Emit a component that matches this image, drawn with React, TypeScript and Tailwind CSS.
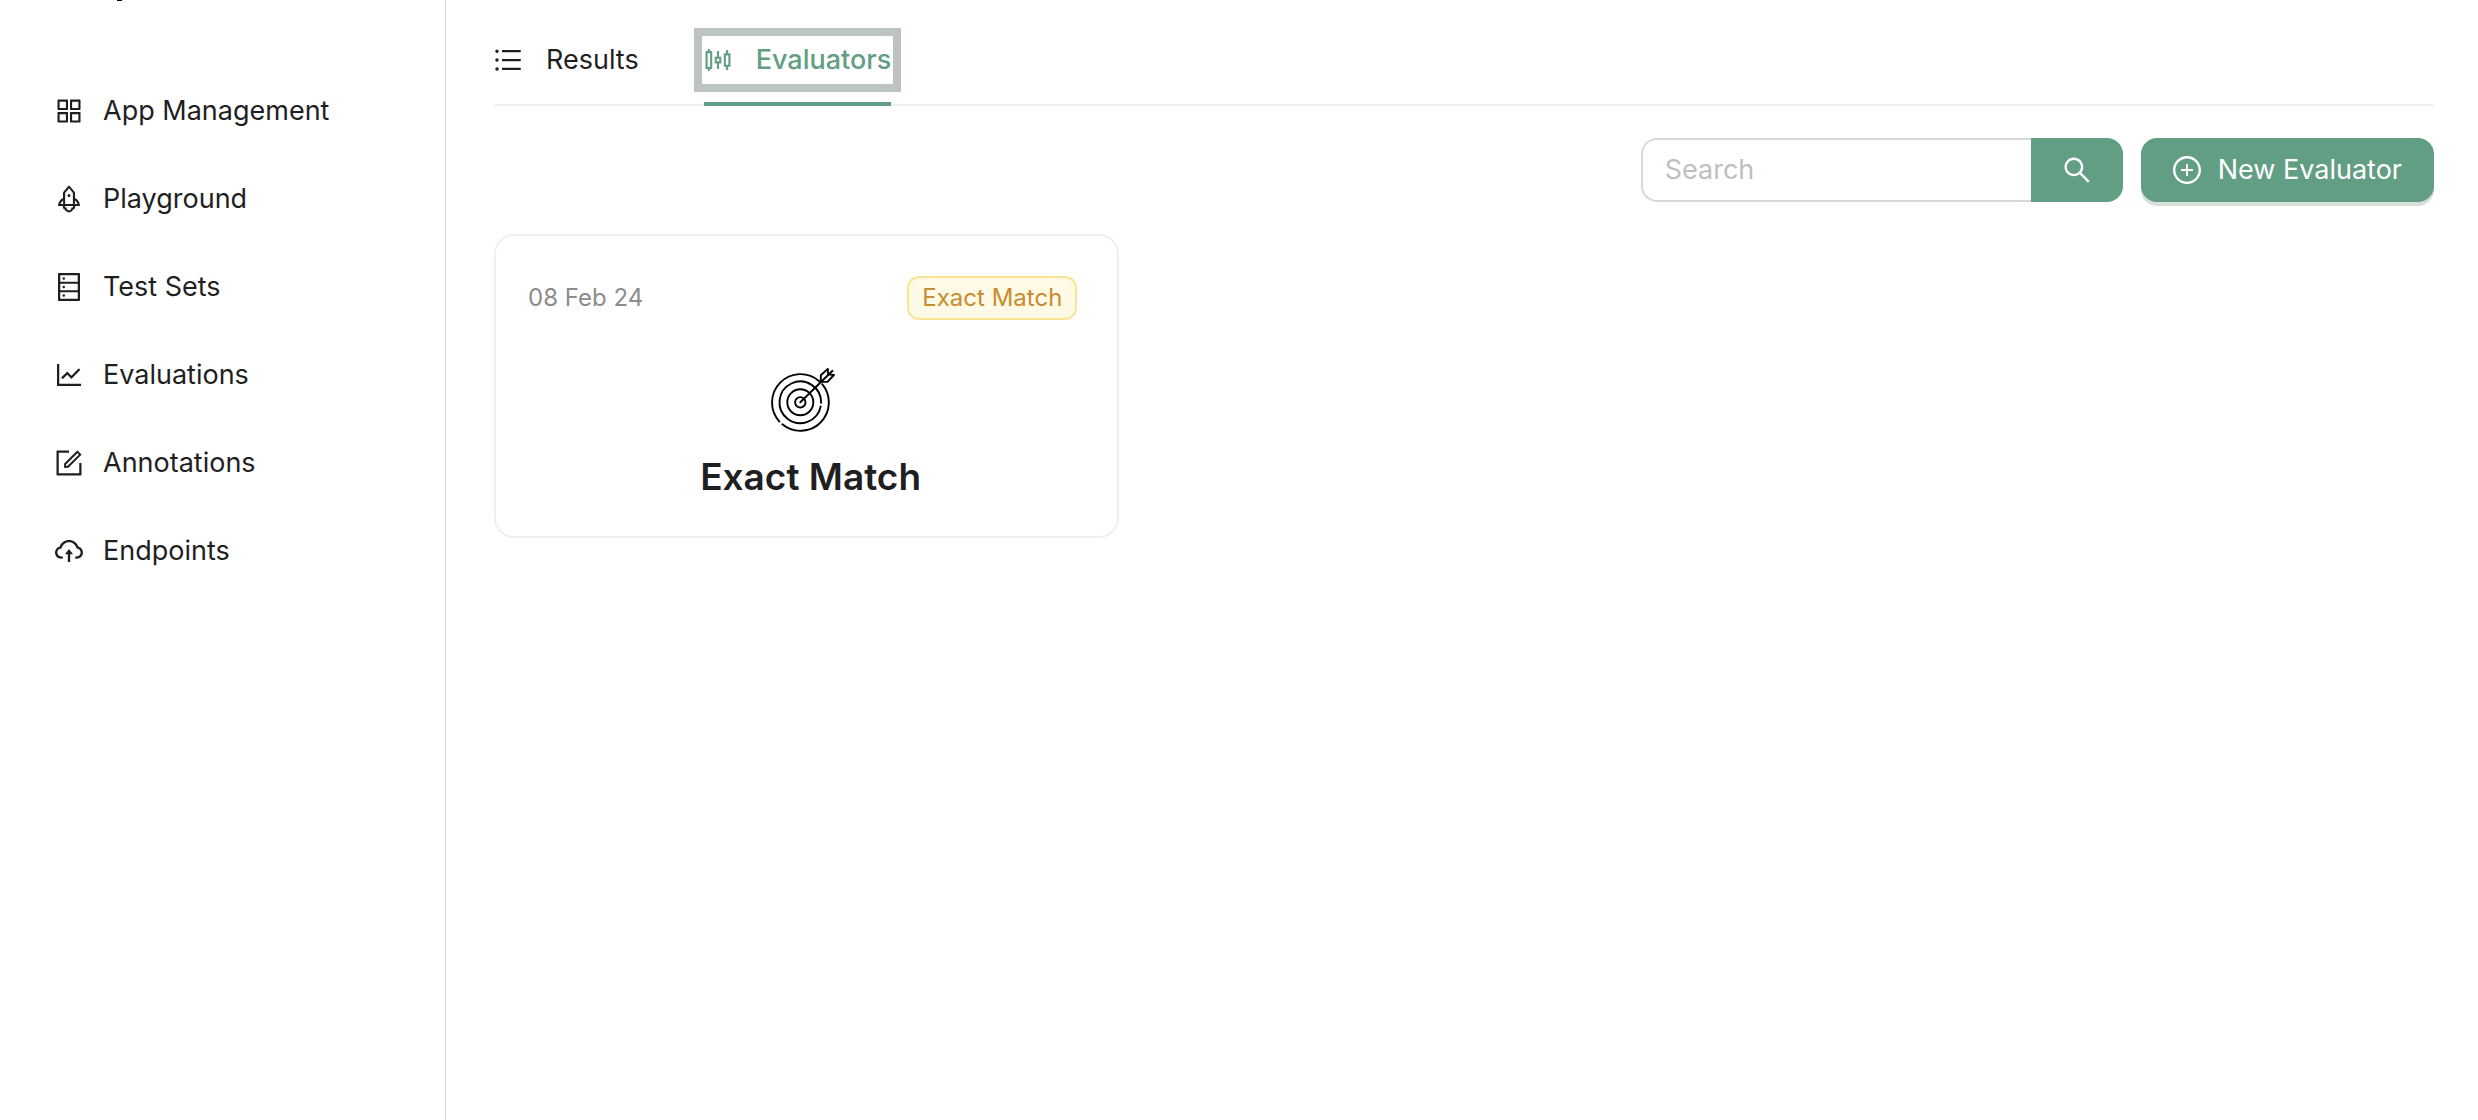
import type { IconType } from "react-icons";
import {
  AiOutlineAppstore,
  AiOutlineCloudUpload,
  AiOutlineDatabase,
  AiOutlineForm,
  AiOutlineLineChart,
  AiOutlinePlusCircle,
  AiOutlineRocket,
  AiOutlineSearch,
  AiOutlineSliders,
  AiOutlineUnorderedList,
} from "react-icons/ai";

const navItems: { label: string; Icon: IconType }[] = [
  { label: "App Management", Icon: AiOutlineAppstore },
  { label: "Playground", Icon: AiOutlineRocket },
  { label: "Test Sets", Icon: AiOutlineDatabase },
  { label: "Evaluations", Icon: AiOutlineLineChart },
  { label: "Annotations", Icon: AiOutlineForm },
  { label: "Endpoints", Icon: AiOutlineCloudUpload },
];

function TargetIcon() {
  return (
    <svg
      viewBox="0 0 64 64"
      className="size-16"
      fill="none"
      stroke="#000"
      strokeWidth="1.9"
      strokeLinecap="round"
      strokeLinejoin="round"
      aria-hidden="true"
    >
      <path d="M8.4 53.6A28.4 28.4 0 0 1 48.2 13.2M51.2 16.2A28.4 28.4 0 0 1 11.3 56.3" />
      <path d="M50.1 34.8A20.8 20.8 0 1 0 49.7 38.4" />
      <circle cx="29.3" cy="34.3" r="13" />
      <circle cx="29.3" cy="34.3" r="5.2" />
      <path d="M29.3 34.3L61.5 2.8" />
      <path d="M49.8 13.9V7.3L56.8 .9L57.2 6.4L63 7L56.4 13.9Z" />
    </svg>
  );
}

function Sidebar() {
  return (
    <aside className="w-[446px] shrink-0 border-r border-[#d9d9d9]">
      <div className="h-[67px] pl-[117px]">
        <div className="h-px w-[5px] bg-black" />
      </div>
      <nav aria-label="Main">
        <ul>
          {navItems.map(({ label, Icon }) => (
            <li key={label}>
              <a href="#" className="flex h-22 items-center gap-[18px] pl-[53px]">
                <Icon className="size-8" />
                {label}
              </a>
            </li>
          ))}
        </ul>
      </nav>
    </aside>
  );
}

export default function App() {
  return (
    <div className="flex min-h-screen bg-white font-[Inter,sans-serif] text-[27px] leading-[44px] text-[#1f1f1f]">
      <Sidebar />
      <main className="min-w-0 flex-1 pr-11 pl-12">
        <div role="tablist" className="flex h-[106px] gap-[65px] border-b-2 border-[#f0f0f0]">
          <button type="button" role="tab" aria-selected="false" className="mt-[38px] flex h-11 items-center gap-6">
            <AiOutlineUnorderedList className="-m-0.5 size-8" />
            Results
          </button>
          <button
            type="button"
            role="tab"
            aria-selected="true"
            className="relative mt-[38px] flex h-11 items-center gap-6 font-medium text-[#629e84] outline-8 outline-offset-2 outline-[#bbc5be] after:absolute after:inset-x-0 after:-bottom-6 after:h-1 after:bg-[#629e84]"
          >
            <AiOutlineSliders className="-m-0.5 size-8" />
            Evaluators
          </button>
        </div>
        <div className="mt-8 flex justify-end gap-[18px]">
          <form role="search" className="flex h-16">
            <input
              type="search"
              aria-label="Search"
              placeholder="Search"
              className="w-[390px] rounded-l-2xl border-2 border-r-0 border-[#d9d9d9] px-[22px] outline-none placeholder:text-[#bfbfbf]"
            />
            <button
              type="button"
              aria-label="Search"
              className="flex w-[92px] items-center justify-center rounded-r-2xl bg-[#629e84] text-white"
            >
              <AiOutlineSearch className="size-8" />
            </button>
          </form>
          <button
            type="button"
            className="flex h-16 items-center gap-[17px] rounded-2xl bg-[#629e84] px-8 text-white shadow-[0_4px_0_#d8e0da]"
          >
            <AiOutlinePlusCircle className="-m-0.5 size-8" />
            New Evaluator
          </button>
        </div>
        <section aria-label="Evaluators" className="mt-8 grid grid-cols-3 gap-8">
          <article className="rounded-[20px] border-2 border-[#f0f0f0] pt-10 pr-10 pb-[37px] pl-8">
            <div className="flex items-center justify-between text-2xl">
              <time className="text-[#8c8c8c]">08 Feb 24</time>
              <span className="flex h-11 items-center rounded-xl border-2 border-[#fbe394] bg-[#fffae6] px-[13px] text-[#c98b31]">
                Exact Match
              </span>
            </div>
            <div className="mt-12 flex flex-col items-center">
              <TargetIcon />
              <h2 className="mt-[23px] pl-4 text-[37px] leading-[44px] font-semibold">Exact Match</h2>
            </div>
          </article>
        </section>
      </main>
    </div>
  );
}
